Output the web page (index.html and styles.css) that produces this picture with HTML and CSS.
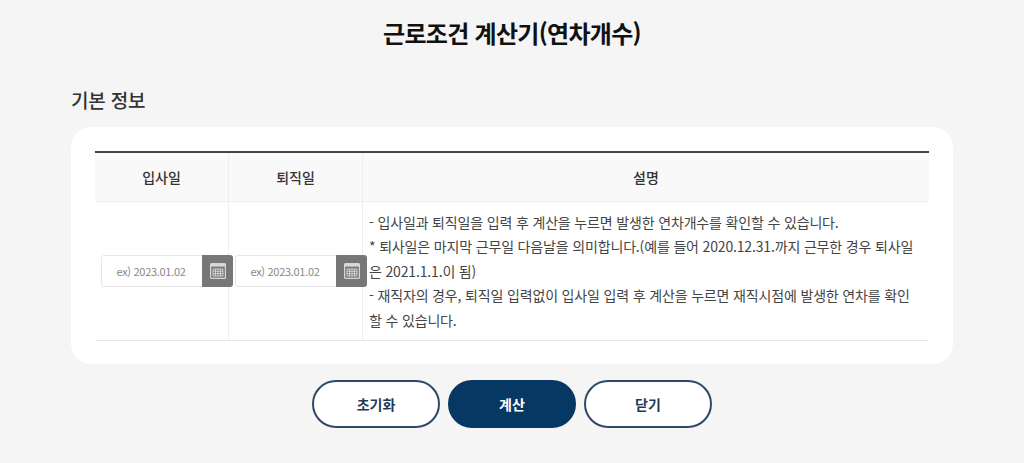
FILE: index.html
```html
<!DOCTYPE html>
<html lang="ko">
<head>
<meta charset="utf-8">
<title>근로조건 계산기(연차개수)</title>
<link rel="stylesheet" href="styles.css">
</head>
<body>
<main class="page">
  <h1 class="title">근로조건 계산기(연차개수)</h1>
  <h2 class="section">기본 정보</h2>
  <section class="card">
    <div class="table">
      <div class="th">입사일</div>
      <div class="th">퇴직일</div>
      <div class="th last">설명</div>
      <div class="td date">
        <div class="field">
          <span class="ph">ex) 2023.01.02</span>
          <span class="cal"><svg viewBox="0 0 16 16" width="16" height="16"><rect x="0.6" y="0.6" width="14.8" height="14.8" rx="1" fill="none" stroke="#d8d8d8" stroke-width="1.2"/><rect x="0.6" y="0.6" width="14.8" height="3" fill="#d8d8d8"/><path d="M3 6h10v7H3zM3 8.3h10M3 10.6h10M5.5 6v7M8 6v7M10.5 6v7" fill="none" stroke="#d8d8d8" stroke-width="0.9"/></svg></span>
        </div>
      </div>
      <div class="td date">
        <div class="field">
          <span class="ph">ex) 2023.01.02</span>
          <span class="cal"><svg viewBox="0 0 16 16" width="16" height="16"><rect x="0.6" y="0.6" width="14.8" height="14.8" rx="1" fill="none" stroke="#d8d8d8" stroke-width="1.2"/><rect x="0.6" y="0.6" width="14.8" height="3" fill="#d8d8d8"/><path d="M3 6h10v7H3zM3 8.3h10M3 10.6h10M5.5 6v7M8 6v7M10.5 6v7" fill="none" stroke="#d8d8d8" stroke-width="0.9"/></svg></span>
        </div>
      </div>
      <div class="td desc">
        <p>- 입사일과 퇴직일을 입력 후 계산을 누르면 발생한 연차개수를 확인할 수 있습니다.</p>
        <p>* 퇴사일은 마지막 근무일 다음날을 의미합니다.(예를 들어 2020.12.31.까지 근무한 경우 퇴사일은 2021.1.1.이 됨)</p>
        <p>- 재직자의 경우, 퇴직일 입력없이 입사일 입력 후 계산을 누르면 재직시점에 발생한 연차를 확인할 수 있습니다.</p>
      </div>
    </div>
  </section>
  <div class="actions">
    <button class="btn" type="button">초기화</button>
    <button class="btn primary" type="button">계산</button>
    <button class="btn" type="button">닫기</button>
  </div>
</main>
</body>
</html>
```

FILE: styles.css
```css
* { box-sizing: border-box; }
html, body { margin: 0; height: 463px; overflow: hidden; }
body {
  background: #f5f5f5;
  font-family: "Noto Sans CJK KR", "Noto Sans", sans-serif;
  color: #333;
}
.page { padding: 15px 71px 0; }
.title {
  margin: 0;
  font-size: 24px;
  line-height: 36px;
  font-weight: 700;
  color: #111;
  text-align: center;
  letter-spacing: -0.7px;
}
.section {
  margin: 34px 0 0;
  font-size: 19px;
  line-height: 30px;
  font-weight: 500;
  color: #333;
  letter-spacing: -0.2px;
}
.card {
  margin-top: 12px;
  background: #fff;
  border-radius: 20px;
  padding: 24px 24px 23px;
  height: 237px;
}
.table {
  display: grid;
  grid-template-columns: 134px 134px 1fr;
  grid-template-rows: 49px 138px;
  border-top: 2px solid #444;
  border-bottom: 1px solid #e8e8e8;
}
.th {
  display: flex;
  align-items: center;
  justify-content: center;
  background: #f9f9f9;
  border-right: 1px solid #eee;
  border-bottom: 1px solid #eee;
  font-size: 14px;
  font-weight: 500;
  color: #333;
}
.th.last { border-right: 0; }
.td { border-right: 1px solid #eee; }
.date {
  display: flex;
  align-items: center;
  padding-left: 6px;
}
.field {
  display: flex;
  width: 132px;
  height: 32px;
  flex: none;
  position: relative;
  z-index: 1;
  background: #fff;
  border: 1px solid #e6e6e6;
  border-radius: 3px;
}
.ph {
  flex: 1;
  display: flex;
  align-items: center;
  justify-content: center;
  font-size: 11px;
  color: #888;
  letter-spacing: -0.3px;
  padding-right: 2px;
}
.cal {
  width: 31px;
  margin: -1px -1px -1px 0;
  background: #777;
  border-radius: 0 3px 3px 0;
  display: flex;
  align-items: center;
  justify-content: center;
}
.desc {
  border-right: 0;
  padding: 8px 13px 0 6px;
  font-size: 14px;
  line-height: 24.4px;
  color: #444;
  letter-spacing: -0.16px;
}
.desc p { margin: 0; }
.actions {
  display: flex;
  justify-content: center;
  gap: 8px;
  margin-top: 16px;
}
.btn {
  width: 128px;
  height: 48px;
  border: 2px solid #2c4a68;
  border-radius: 24px;
  background: #fff;
  font: 700 14px "Noto Sans CJK KR", sans-serif;
  color: #1f3a56;
}
.btn.primary {
  background: #073763;
  border-color: #073763;
  color: #fff;
}
```
